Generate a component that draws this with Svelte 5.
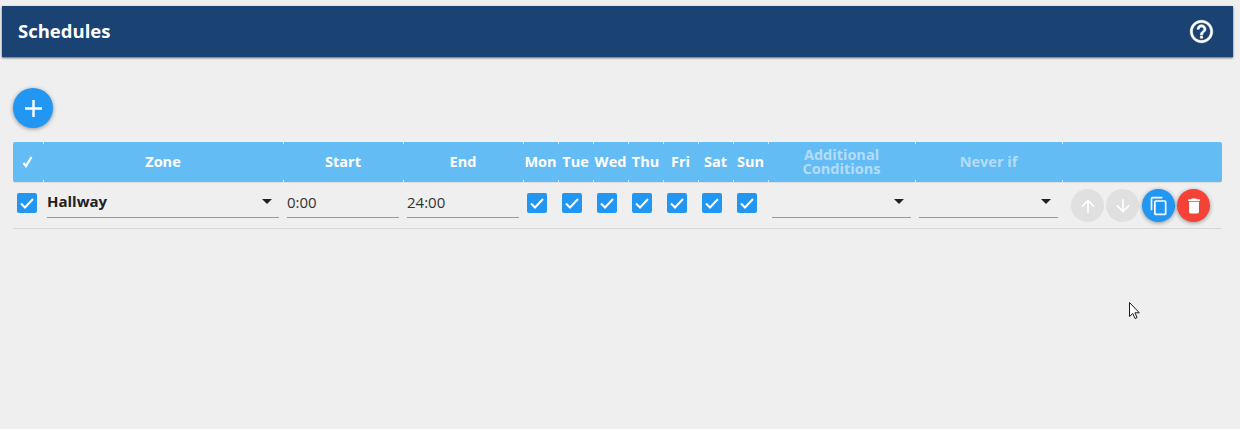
<script lang="ts">
  const days = ["Mon", "Tue", "Wed", "Thu", "Fri", "Sat", "Sun"];
</script>

<div class="page">
  <header class="bar">
    <h1>Schedules</h1>
    <svg class="help" viewBox="0 0 24 24" width="27" height="27">
      <path fill="#fff" stroke="#fff" stroke-width="0.5" d="M11 18h2v-2h-2v2zm1-16C6.48 2 2 6.48 2 12s4.48 10 10 10 10-4.48 10-10S17.52 2 12 2zm0 18c-4.41 0-8-3.59-8-8s3.59-8 8-8 8 3.59 8 8-3.59 8-8 8zm0-14c-2.21 0-4 1.79-4 4h2c0-1.1.9-2 2-2s2 .9 2 2c0 2-3 1.75-3 5h2c0-2.25 3-2.5 3-5 0-2.21-1.79-4-4-4z" />
    </svg>
  </header>

  <main class="content">
    <button class="fab add" type="button" aria-label="Add">
      <svg viewBox="0 0 24 24" width="29" height="29"><path fill="#fff" d="M19 13h-6v6h-2v-6H5v-2h6V5h2v6h6v2z" /></svg>
    </button>

    <div class="grid head">
      <div class="th">
        <svg class="allcheck" viewBox="0 0 12 12" width="12" height="12"><path d="M1.500 7l2.500 3 5.500-9" /></svg>
      </div>
      <div class="th">Zone</div>
      <div class="th">Start</div>
      <div class="th">End</div>
      {#each days as d}
        <div class="th">{d}</div>
      {/each}
      <div class="th dim two">Additional Conditions</div>
      <div class="th dim">Never if</div>
      <div class="th"></div>
    </div>

    <div class="grid row">
      <div class="cell first"><span class="check"><svg viewBox="0 0 20 20" width="20" height="20"><path d="M4 10.500l4 4 8-8.500" /></svg></span></div>
      <div class="cell pad"><div class="field zone"><b>Hallway</b><i class="caret"></i></div></div>
      <div class="cell pad"><div class="field">0:00</div></div>
      <div class="cell pad"><div class="field">24:00</div></div>
      {#each days as d}
        <div class="cell day"><span class="check"><svg viewBox="0 0 20 20" width="20" height="20"><path d="M4 10.500l4 4 8-8.500" /></svg></span></div>
      {/each}
      <div class="cell pad"><div class="field zone"><i class="caret"></i></div></div>
      <div class="cell pad"><div class="field zone"><i class="caret"></i></div></div>
      <div class="cell actions">
        <button class="mini off" type="button" aria-label="Up">
          <svg viewBox="0 0 24 24" width="20" height="20"><path fill="#fff" d="M4 12l1.410 1.410L11 7.830V20h2V7.830l5.580 5.590L20 12l-8-8-8 8z" /></svg>
        </button>
        <button class="mini off" type="button" aria-label="Down">
          <svg viewBox="0 0 24 24" width="20" height="20"><path fill="#fff" d="M20 12l-1.410-1.410L13 16.170V4h-2v12.170l-5.580-5.590L4 12l8 8 8-8z" /></svg>
        </button>
        <button class="mini blue" type="button" aria-label="Copy">
          <svg viewBox="0 0 24 24" width="20" height="20"><path fill="#fff" d="M16 1H4c-1.100 0-2 .9-2 2v14h2V3h12V1zm3 4H8c-1.100 0-2 .9-2 2v14c0 1.100.9 2 2 2h11c1.100 0 2-.9 2-2V7c0-1.100-.9-2-2-2zm0 16H8V7h11v14z" /></svg>
        </button>
        <button class="mini red" type="button" aria-label="Delete">
          <svg viewBox="0 0 24 24" width="20" height="20"><path fill="#fff" d="M6 19c0 1.100.9 2 2 2h8c1.100 0 2-.9 2-2V7H6v12zM19 4h-3.500l-1-1h-5l-1 1H5v2h14V4z" /></svg>
        </button>
      </div>
    </div>
  </main>

  <svg class="cursor" viewBox="0 0 14 20" width="14" height="20">
    <path fill="#fff" stroke="#1a1a1a" stroke-width="1" d="M1.500 1.500v14l3.300-3 2.300 5 2-.9-2.200-4.800h4.400z" />
  </svg>
</div>

<style>
  :global(body) {
    background: #efefef;
  }
  .page {
    position: relative;
    height: 429px;
    padding-top: 6px;
    box-sizing: border-box;
    background: #efefef;
    font-family: "Open Sans", "Liberation Sans", sans-serif;
    overflow: hidden;
  }
  .bar {
    display: flex;
    align-items: center;
    justify-content: space-between;
    height: 51px;
    margin: 0 7px 0 2px;
    padding: 0 18px 2px 16px;
    box-sizing: border-box;
    background: #1a4373;
    box-shadow: 0 1px 2px rgba(0, 0, 0, 0.6);
  }
  h1 {
    margin: 0;
    color: #fff;
    font: 700 18.500px "Open Sans", sans-serif;
  }
  .help {
    display: block;
    margin-top: 2px;
  }
  .content {
    padding: 31px 18px 0 13px;
  }
  .fab,
  .mini {
    display: flex;
    align-items: center;
    justify-content: center;
    padding: 0;
    border: 0;
    border-radius: 50%;
    box-shadow: 0 1px 4px rgba(0, 0, 0, 0.4);
  }
  .add {
    width: 40px;
    height: 40px;
    margin-bottom: 14px;
    background: #2196f3;
  }
  .grid {
    display: grid;
    grid-template-columns: 30px 240px 120px 120px repeat(7, 35px) 147px 147px 160px;
  }
  .head {
    height: 40px;
    background: #64bcf5;
    border-radius: 2px;
    box-shadow: 0 1px 0 #ddd;
  }
  .th {
    position: relative;
    display: flex;
    align-items: center;
    justify-content: center;
    color: #fff;
    font-size: 14.500px;
    font-weight: 700;
    line-height: 14px;
    text-align: center;
  }
  .th + .th::before,
  .th + .th::after {
    content: "";
    position: absolute;
    left: 0;
    width: 1px;
    height: 2px;
    background: #cfe9fb;
  }
  .th + .th::before {
    top: 0;
  }
  .th + .th::after {
    bottom: 0;
  }
  .allcheck path {
    fill: none;
    stroke: #fff;
    stroke-width: 2.200;
  }
  .dim {
    color: #b4dcf8;
  }
  .two {
    padding: 0 20px;
  }
  .row {
    height: 46px;
    border-bottom: 1px solid #d6d6d6;
  }
  .cell {
    display: flex;
    justify-content: center;
    align-items: flex-start;
    padding-top: 11px;
  }
  .cell.first {
    justify-content: flex-start;
    padding-left: 4px;
  }
  .cell.day {
    justify-content: flex-start;
    padding-left: 4px;
  }
  .cell.pad {
    padding: 0 4px;
  }
  .field {
    flex: 1;
    height: 36px;
    box-sizing: border-box;
    border-bottom: 1px solid #999;
    color: #333;
    font: 400 15px/41px "Open Sans", sans-serif;
  }
  .zone {
    display: flex;
    align-items: center;
    justify-content: space-between;
    padding: 0 7px 0 0;
    color: #212121;
    line-height: 1;
  }
  .zone b {
    font-size: 15px;
    margin-top: 4px;
  }
  .caret {
    margin-left: auto;
    margin-top: 4px;
    border: 5px solid transparent;
    border-top-color: #222;
    border-bottom-width: 0;
  }
  .check {
    display: flex;
    width: 20px;
    height: 20px;
    border-radius: 2px;
    background: #2196f3;
  }
  .check path {
    fill: none;
    stroke: #fff;
    stroke-width: 2;
  }
  .actions {
    justify-content: flex-start;
    gap: 2px;
    padding: 7px 0 0 9px;
  }
  .mini {
    width: 33px;
    height: 33px;
  }
  .off {
    background: #e0e0e0;
    box-shadow: none;
  }
  .blue {
    margin-left: 1px;
    background: #2196f3;
  }
  .red {
    background: #f44336;
  }
  .cursor {
    position: absolute;
    left: 1128px;
    top: 301px;
  }
</style>
